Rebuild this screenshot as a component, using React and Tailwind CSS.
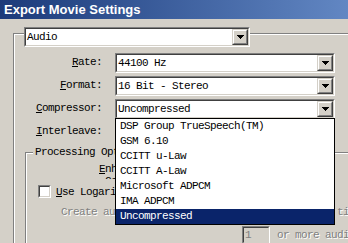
import React from 'react'

const items = [
  'DSP Group TrueSpeech(TM)',
  'GSM 6.10',
  'CCITT u-Law',
  'CCITT A-Law',
  'Microsoft ADPCM',
  'IMA ADPCM',
  'Uncompressed',
]

function Arrow() {
  return (
    <svg width="7" height="4" viewBox="0 0 7 4" shapeRendering="crispEdges">
      <rect x="0" y="0" width="7" height="1" fill="#000" />
      <rect x="1" y="1" width="5" height="1" fill="#000" />
      <rect x="2" y="2" width="3" height="1" fill="#000" />
      <rect x="3" y="3" width="1" height="1" fill="#000" />
    </svg>
  )
}

function Combo({ text, className }) {
  return (
    <div className={`flex shrink-0 h-[20px] bg-white border border-t-[#808080] border-l-[#808080] border-b-white border-r-white ${className}`}>
      <div className="flex flex-1 border border-t-[#404040] border-l-[#404040] border-b-[#d4d0c8] border-r-[#d4d0c8]">
        <span className="flex-1 pl-[1px] leading-[16px] whitespace-nowrap">{text}</span>
        <div className="w-[16px] h-[16px] bg-[#d4d0c8] border border-t-[#d4d0c8] border-l-[#d4d0c8] border-b-[#404040] border-r-[#404040]">
          <div className="h-full flex items-center justify-center border border-t-white border-l-white border-b-[#808080] border-r-[#808080]">
            <Arrow />
          </div>
        </div>
      </div>
    </div>
  )
}

function Row({ label, hot, text }) {
  return (
    <div className="flex items-center h-[20px]">
      <div className="w-[88px] shrink-0 text-right pb-[3px] whitespace-nowrap">
        <u>{hot}</u>{label}
      </div>
      <Combo text={text} className="ml-[13px] w-[220px]" />
    </div>
  )
}

export default function App() {
  const disabled = 'text-[#808080] [text-shadow:1px_1px_0_#fff]'

  return (
    <div className="relative w-[348px] h-[243px] overflow-hidden bg-[#d4d0c8] text-black font-['Liberation_Mono','Noto_Sans_CJK_SC',monospace] text-[11px] tracking-[-0.6px] leading-[12px]">
      {/* Title bar */}
      <div className="h-[19px] flex items-center pl-[4px] bg-gradient-to-r from-[#1c3a7a] to-[#6287c3]">
        <span className="text-white font-bold text-[13px] tracking-normal font-['Liberation_Sans',Arial,sans-serif]">
          Export Movie Settings
        </span>
      </div>

      {/* Audio group */}
      <div className="pt-[14px] pl-[13px]">
        <div className="h-[220px] border-l border-t border-[#808080] shadow-[inset_1px_1px_0_#fff]">
          <Combo text="Audio" className="ml-[10px] -mt-[7px] w-[226px]" />

          <div className="mt-[6px] flex flex-col gap-[3px]">
            <Row hot="R" label="ate:" text="44100 Hz" />
            <Row hot="F" label="ormat:" text="16 Bit - Stereo" />
            <Row hot="C" label="ompressor:" text="Uncompressed" />
            <Row hot="I" label="nterleave:" text="1 Second" />
          </div>

          {/* Processing Options */}
          <div className="ml-[11px] mt-[10px] h-[100px] border-l border-t border-[#808080] shadow-[inset_1px_1px_0_#fff]">
            <div className="w-fit -mt-[7px] ml-[7px] px-[2px] bg-[#d4d0c8] whitespace-nowrap">
              Processing Options
            </div>

            <div className="ml-[73px] mt-[5px] h-[16px] overflow-hidden whitespace-nowrap">
              <div><u>E</u>nhanced Rate</div>
              <div className="pl-[6px]">Conversion:</div>
            </div>

            <div className="flex items-center mt-[6px] ml-[12px]">
              <div className="w-[13px] h-[13px] shrink-0 bg-white border border-t-[#808080] border-l-[#808080] border-b-white border-r-white">
                <div className="h-full border border-t-[#404040] border-l-[#404040] border-b-[#d4d0c8] border-r-[#d4d0c8]" />
              </div>
              <span className="ml-[5px] whitespace-nowrap">
                <u>U</u>se Logarithmic Audio Fades
              </span>
            </div>

            <div className={`mt-[8px] ml-[35px] whitespace-nowrap ${disabled}`}>
              Create audio preview files if there are audio timelines
            </div>

            <div className="flex items-center mt-[8px] ml-[216px]">
              <div className="w-[28px] h-[18px] shrink-0 bg-[#d4d0c8] border border-t-[#808080] border-l-[#808080] border-b-white border-r-white">
                <div className="h-full pl-[1px] leading-[14px] text-[#808080] border border-t-[#404040] border-l-[#404040] border-b-[#d4d0c8] border-r-[#d4d0c8]">
                  1
                </div>
              </div>
              <span className={`ml-[7px] shrink-0 whitespace-nowrap ${disabled}`}>or more audio tracks</span>
            </div>
          </div>
        </div>
      </div>

      {/* Open dropdown list */}
      <div className="absolute left-[115px] top-[118px] w-[220px] bg-white border border-black">
        {items.map((item) => (
          <div
            key={item}
            className={`h-[15px] leading-[15px] pl-[4px] whitespace-nowrap ${
              item === 'Uncompressed' ? 'bg-[#0a246a] text-white' : ''
            }`}
          >
            {item}
          </div>
        ))}
      </div>
    </div>
  )
}
